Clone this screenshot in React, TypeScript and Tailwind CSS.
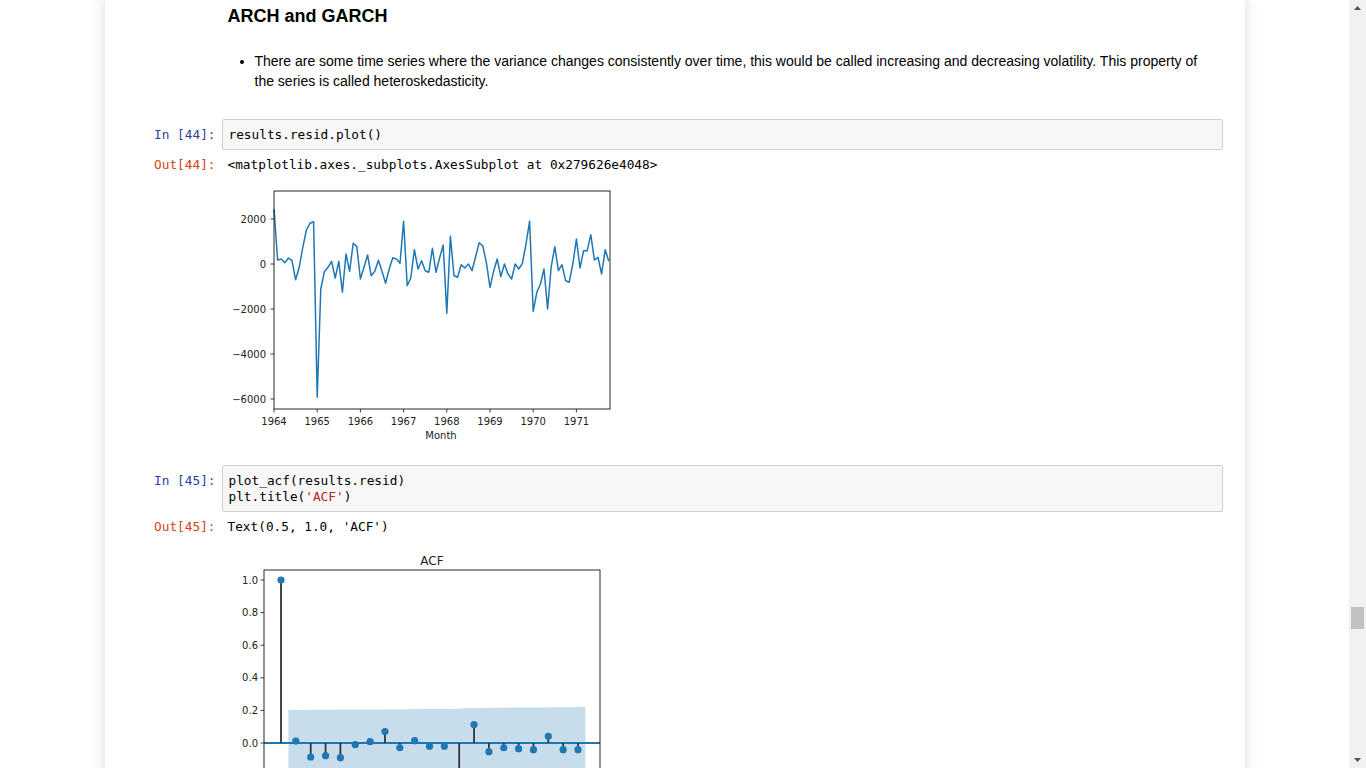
import React from 'react';

const resid = [
  2444, 178, 222, 59, 267, 148, -696, -148, 740, 1511, 1807, 1880,
  -5926, -1111, -340, -148, 118, -622, 118, -1259, 444, -326, 918, 785,
  -667, -148, 400, -518, -326, 163, -326, -859, -222, 281, 222, 30,
  1896, -963, -622, 637, -222, 148, -296, -370, 696, -370, 267, 844,
  -2193, 1230, -518, -593, -30, -178, 0, -296, 326, 948, 800, 59,
  -1037, -326, 222, -563, 0, -444, -667, 0, -222, 30, 889, 1896,
  -2104, -1259, -889, -222, -2000, -119, 770, -296, -30, -741, -815, 0,
  1111, -178, 593, 593, 1304, 178, 296, -444, 637, 118,
];

const acf = [
  1.0, 0.012, -0.086, -0.078, -0.09, -0.01, 0.008, 0.07, -0.029, 0.014, -0.02,
  -0.02, -0.22, 0.113, -0.053, -0.029, -0.035, -0.041, 0.041, -0.041, -0.041,
];

const tickFont = { fontFamily: '"DejaVu Sans", sans-serif', fontSize: 10, fill: '#222' };

const ResidPlot = () => {
  const yOf = (v: number) => 84 - v * 0.0225;
  const pts = resid.map((v, i) => `${(46 + i * 3.6).toFixed(1)},${yOf(v).toFixed(1)}`).join(' ');
  const yt = [2000, 0, -2000, -4000, -6000];
  const years = [1964, 1965, 1966, 1967, 1968, 1969, 1970, 1971];
  return (
    <svg width="400" height="265" className="block">
      <polyline points={pts} fill="none" stroke="#1f77b4" strokeWidth="1.5" strokeLinejoin="round" />
      <rect x="46" y="11" width="336" height="218" fill="none" stroke="#111" strokeWidth="0.9" />
      {yt.map((v) => (
        <g key={v}>
          <line x1="42.5" x2="46" y1={yOf(v)} y2={yOf(v)} stroke="#111" strokeWidth="0.8" />
          <text x="38" y={yOf(v) + 3.5} textAnchor="end" style={tickFont}>
            {v < 0 ? `\u2212${-v}` : v}
          </text>
        </g>
      ))}
      {years.map((y, i) => {
        const x = 46 + i * 43.2;
        return (
          <g key={y}>
            <line x1={x} x2={x} y1="229" y2="232.5" stroke="#111" strokeWidth="0.8" />
            <text x={x} y="245" textAnchor="middle" style={tickFont}>{y}</text>
          </g>
        );
      })}
      <text x="213" y="259" textAnchor="middle" style={tickFont}>Month</text>
    </svg>
  );
};

const AcfPlot = () => {
  const yOf = (v: number) => 203 - 163 * v;
  const xOf = (k: number) => 53 + 14.85 * k;
  const upper: [number, number][] = [];
  for (let k = 0; k <= 20; k++) {
    const top = k < 12 ? 170 - k * 0.1 : 168 - (k - 12) * 0.12;
    upper.push([xOf(k + 0.5), top]);
  }
  const bandPts = [
    ...upper.map(([x, y]) => `${x.toFixed(1)},${y.toFixed(1)}`),
    ...upper.slice().reverse().map(([x, y]) => `${x.toFixed(1)},${(406 - y).toFixed(1)}`),
  ].join(' ');
  const yt = [1.0, 0.8, 0.6, 0.4, 0.2, 0.0];
  return (
    <svg width="400" height="300" className="block">
      <text x="204" y="25" textAnchor="middle" style={{ ...tickFont, fontSize: 12 }}>ACF</text>
      <polygon points={bandPts} fill="#1f77b4" fillOpacity="0.25" />
      <line x1="36" x2="372" y1="203" y2="203" stroke="#1f77b4" strokeWidth="2" />
      {acf.map((v, k) => (
        <g key={k}>
          <line x1={xOf(k)} x2={xOf(k)} y1="203" y2={yOf(v)} stroke="#333" strokeWidth="1.8" />
          <circle cx={xOf(k)} cy={yOf(v)} r="3.6" fill="#1f77b4" />
        </g>
      ))}
      <rect x="36" y="30" width="336" height="300" fill="none" stroke="#111" strokeWidth="0.9" />
      {yt.map((v) => (
        <g key={v}>
          <line x1="32.5" x2="36" y1={yOf(v)} y2={yOf(v)} stroke="#111" strokeWidth="0.8" />
          <text x="30" y={yOf(v) + 3.5} textAnchor="end" style={tickFont}>{v.toFixed(1)}</text>
        </g>
      ))}
    </svg>
  );
};

const mono = 'font-["DejaVu_Sans_Mono","Liberation_Mono",monospace] text-[12.75px] leading-[16px]';

const InPrompt = ({ n }: { n: number }) => (
  <div className={`w-[97px] shrink-0 text-right pr-[6px] pt-[7.5px] text-[#303F9F] ${mono}`}>In [{n}]:</div>
);

const OutPrompt = ({ n }: { n: number }) => (
  <div className={`w-[97px] shrink-0 text-right pr-[6px] text-[#D84315] ${mono}`}>Out[{n}]:</div>
);

export default function App() {
  return (
    <div className="flex h-[768px] w-[1366px] overflow-hidden bg-white">
      <div className="flex-1 overflow-hidden">
        <div className="mx-auto w-[1140px] min-h-[768px] bg-white px-[15px] shadow-[0_0_12px_1px_rgba(87,87,87,0.2)]">
          <div className="pl-[5px] pr-[7px]">
            {/* Markdown cell */}
            <div className="flex">
              <div className="w-[97px] shrink-0" />
              <div className='flex-1 pl-[6px] font-["Liberation_Sans",Arial,sans-serif] text-black'>
                <h3 className="pt-[5px] text-[18px] font-bold leading-[22px]">ARCH and GARCH</h3>
                <ul className="mt-[24px] list-disc pl-[27px] text-[14px] leading-[20px] pr-[8px]">
                  <li>
                    There are some time series where the variance changes consistently over time, this would be called
                    increasing and decreasing volatility. This property of the series is called heteroskedasticity.
                  </li>
                </ul>
              </div>
            </div>

            {/* Cell 44 */}
            <div className="mt-[28px] flex">
              <InPrompt n={44} />
              <div className={`flex-1 rounded-[2px] border border-[#cfcfcf] bg-[#f7f7f7] pl-[6px] pr-[5px] py-[6.5px] text-black ${mono}`}>
                results.resid.plot()
              </div>
            </div>
            <div className="mt-[7px] flex">
              <OutPrompt n={44} />
              <div className="flex-1 pl-[6px]">
                <div className={`text-black ${mono}`}>&lt;matplotlib.axes._subplots.AxesSubplot at 0x279626e4048&gt;</div>
                <div className="mt-[7px]">
                  <ResidPlot />
                </div>
              </div>
            </div>

            {/* Cell 45 */}
            <div className="mt-[20px] flex">
              <InPrompt n={45} />
              <div className={`flex-1 rounded-[2px] border border-[#cfcfcf] bg-[#f7f7f7] pl-[6px] pr-[5px] py-[6.5px] text-black ${mono}`}>
                <div>plot_acf(results.resid)</div>
                <div>
                  plt.title(<span className="text-[#BA2121]">'ACF'</span>)
                </div>
              </div>
            </div>
            <div className="mt-[7px] flex">
              <OutPrompt n={45} />
              <div className="flex-1 pl-[6px]">
                <div className={`text-black ${mono}`}>Text(0.5, 1.0, 'ACF')</div>
                <div className="mt-[5px]">
                  <AcfPlot />
                </div>
              </div>
            </div>
          </div>
        </div>
      </div>

      {/* Scrollbar */}
      <div className="relative w-[17px] shrink-0 bg-[#f1f1f1]">
        <svg width="17" height="17" className="absolute left-0 top-0">
          <path d="M5 10 L8.5 6 L12 10 Z" fill="#505050" />
        </svg>
        <div className="absolute left-[2px] top-[607px] h-[22px] w-[13px] bg-[#c1c1c1]" />
        <svg width="17" height="17" className="absolute bottom-0 left-0">
          <path d="M5 7 L8.5 11 L12 7 Z" fill="#505050" />
        </svg>
      </div>
    </div>
  );
}
